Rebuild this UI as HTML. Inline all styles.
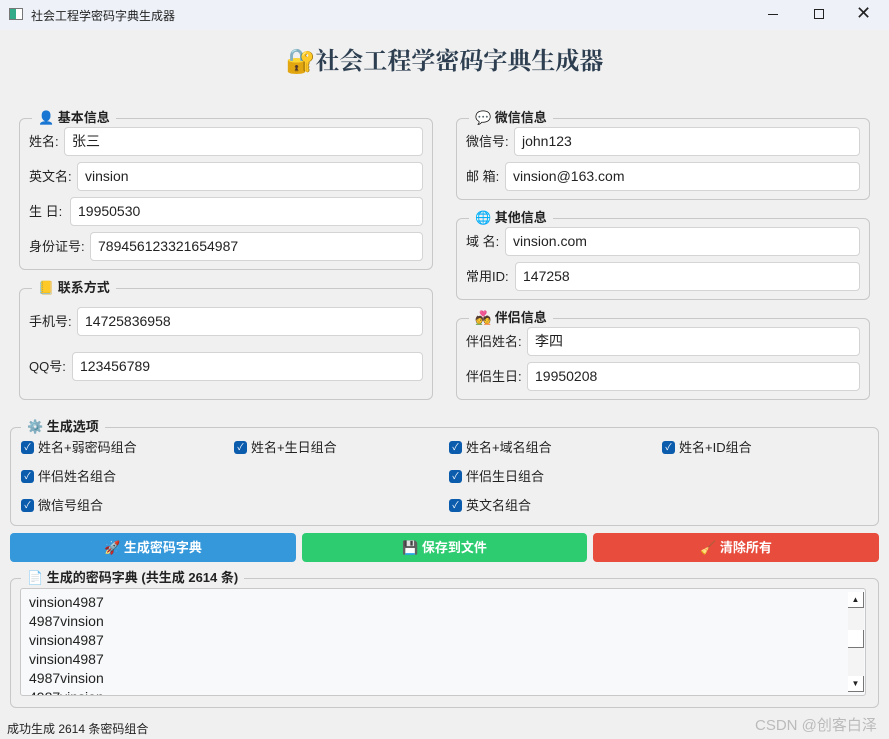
<!DOCTYPE html>
<html><head><meta charset="utf-8"><style>
*{box-sizing:border-box;margin:0;padding:0}
body{width:889px;height:739px;background:#f0f0f0;font-family:"Liberation Sans","Noto Sans CJK SC",sans-serif;font-size:14px;color:#222;position:relative;overflow:hidden}
.a{position:absolute}
.tb{left:0;top:0;width:889px;height:30px;background:#eef2f8}
.grp{position:absolute;border:1px solid #c8c8c8;border-radius:6px}
.lg{position:absolute;top:-10px;left:12px;background:#f0f0f0;padding:0 6px;font-weight:bold;font-size:13px;line-height:18px}
.in{position:absolute;height:29px;background:#fff;border:1px solid #d4d4d4;border-radius:4px;padding-left:7px;line-height:27px;font-size:14px}
.lb{position:absolute;font-size:13px;line-height:16px}
.cb{position:absolute;font-size:13px;line-height:16px;padding-left:17px}
.cb:before{content:"✓";position:absolute;left:0;top:1px;width:13px;height:13px;background:#0b5cad;border-radius:3px;color:#fff;font-size:9px;line-height:13px;text-align:center}
.btn{position:absolute;top:533px;height:29px;border-radius:4px;color:#fff;font-weight:bold;font-size:13px;text-align:center;line-height:29px}
</style></head><body>
<div class="a tb"></div>
<div class="a" style="left:9px;top:8px;width:14px;height:12px;border:1px solid #777;background:linear-gradient(90deg,#3a8 0 50%,#fff 50%)"></div>
<div class="a" style="left:31px;top:7px;font-size:12px">社会工程学密码字典生成器</div>
<div class="a" style="left:768px;top:14px;width:10px;border-top:1px solid #222"></div>
<div class="a" style="left:814px;top:9px;width:10px;height:10px;border:1px solid #222"></div>
<div class="a" style="left:856px;top:3px;font-size:18px">✕</div>
<div class="a" style="left:0;width:889px;top:41px;text-align:center;font-family:'Noto Serif CJK SC',serif;font-size:24px;font-weight:bold;color:#2c3e50">🔐社会工程学密码字典生成器</div>

<div class="grp" style="left:19px;top:118px;width:414px;height:152px"><div class="lg">👤 基本信息</div></div>
<div class="lb" style="left:29px;top:134px">姓名:</div><div class="in" style="left:64px;top:127px;width:359px">张三</div>
<div class="lb" style="left:29px;top:169px">英文名:</div><div class="in" style="left:77px;top:162px;width:346px">vinsion</div>
<div class="lb" style="left:29px;top:204px">生 日:</div><div class="in" style="left:70px;top:197px;width:353px">19950530</div>
<div class="lb" style="left:29px;top:239px">身份证号:</div><div class="in" style="left:90px;top:232px;width:333px">789456123321654987</div>

<div class="grp" style="left:19px;top:288px;width:414px;height:112px"><div class="lg">📒 联系方式</div></div>
<div class="lb" style="left:29px;top:314px">手机号:</div><div class="in" style="left:77px;top:307px;width:346px">14725836958</div>
<div class="lb" style="left:29px;top:359px">QQ号:</div><div class="in" style="left:72px;top:352px;width:351px">123456789</div>

<div class="grp" style="left:456px;top:118px;width:414px;height:82px"><div class="lg">💬 微信信息</div></div>
<div class="lb" style="left:466px;top:134px">微信号:</div><div class="in" style="left:514px;top:127px;width:346px">john123</div>
<div class="lb" style="left:466px;top:169px">邮 箱:</div><div class="in" style="left:505px;top:162px;width:355px">vinsion@163.com</div>

<div class="grp" style="left:456px;top:218px;width:414px;height:82px"><div class="lg">🌐 其他信息</div></div>
<div class="lb" style="left:466px;top:234px">域 名:</div><div class="in" style="left:505px;top:227px;width:355px">vinsion.com</div>
<div class="lb" style="left:466px;top:269px">常用ID:</div><div class="in" style="left:515px;top:262px;width:345px">147258</div>

<div class="grp" style="left:456px;top:318px;width:414px;height:82px"><div class="lg">💑 伴侣信息</div></div>
<div class="lb" style="left:466px;top:334px">伴侣姓名:</div><div class="in" style="left:527px;top:327px;width:333px">李四</div>
<div class="lb" style="left:466px;top:369px">伴侣生日:</div><div class="in" style="left:527px;top:362px;width:333px">19950208</div>

<div class="grp" style="left:10px;top:427px;width:869px;height:99px"><div class="lg" style="left:10px">⚙️ 生成选项</div></div>
<div class="cb" style="left:21px;top:440px">姓名+弱密码组合</div>
<div class="cb" style="left:234px;top:440px">姓名+生日组合</div>
<div class="cb" style="left:449px;top:440px">姓名+域名组合</div>
<div class="cb" style="left:662px;top:440px">姓名+ID组合</div>
<div class="cb" style="left:21px;top:469px">伴侣姓名组合</div>
<div class="cb" style="left:449px;top:469px">伴侣生日组合</div>
<div class="cb" style="left:21px;top:498px">微信号组合</div>
<div class="cb" style="left:449px;top:498px">英文名组合</div>

<div class="btn" style="left:10px;width:286px;background:#3498db">🚀 生成密码字典</div>
<div class="btn" style="left:302px;width:285px;background:#2ecc71">💾 保存到文件</div>
<div class="btn" style="left:593px;width:286px;background:#e74c3c">🧹 清除所有</div>

<div class="grp" style="left:10px;top:578px;width:869px;height:130px"><div class="lg" style="left:10px">📄 生成的密码字典 (共生成 2614 条)</div></div>
<div class="a" style="left:20px;top:588px;width:846px;height:108px;background:#f8f9fa;border:1px solid #c8c8c8;border-radius:3px;overflow:hidden;padding:4px 0 0 8px;font-size:14px;line-height:19px">vinsion4987<br>4987vinsion<br>vinsion4987<br>vinsion4987<br>4987vinsion<br>4987vinsion</div>
<div class="a" style="left:848px;top:592px;width:16px;height:100px;background:#f4f4f4"></div>
<div class="a" style="left:848px;top:592px;width:16px;height:16px;background:#fff;border-right:1px solid #777;border-bottom:1px solid #777;font-size:8px;text-align:center;line-height:16px">▲</div>
<div class="a" style="left:848px;top:630px;width:16px;height:18px;background:#fff;border-right:1px solid #777;border-bottom:1px solid #777"></div>
<div class="a" style="left:848px;top:676px;width:16px;height:16px;background:#fff;border-right:1px solid #777;border-bottom:1px solid #777;font-size:8px;text-align:center;line-height:16px">▼</div>
<div class="a" style="left:7px;top:720px;font-size:12px">成功生成 2614 条密码组合</div>
<div class="a" style="left:755px;top:714px;font-size:15px;color:#bbb">CSDN @创客白泽</div>
</body></html>
